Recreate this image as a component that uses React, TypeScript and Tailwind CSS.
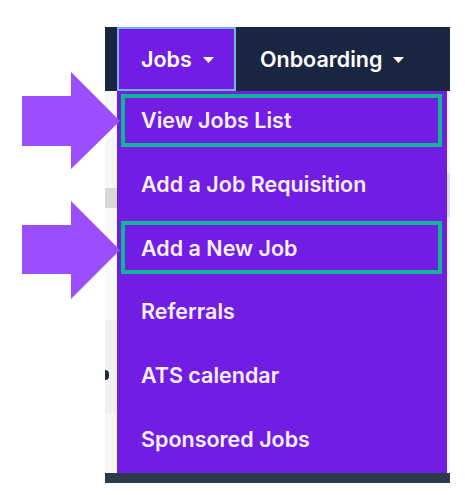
import React from "react";

const items = [
  { label: "View Jobs List", marked: true },
  { label: "Add a Job Requisition", marked: false },
  { label: "Add a New Job", marked: true },
  { label: "Referrals", marked: false },
  { label: "ATS calendar", marked: false },
  { label: "Sponsored Jobs", marked: false },
];

function Caret() {
  return (
    <svg width="11" height="6" viewBox="0 0 11 6" className="ml-[11px] mt-[2px]">
      <path d="M0 0 L11 0 L5.5 6 Z" fill="#ffffff" />
    </svg>
  );
}

function Arrows() {
  return (
    <svg width="465" height="495" className="absolute left-0 top-0 pointer-events-none">
      <polygon points="22,96 71,96 71,72 120,121 71,169 71,146 22,146" fill="#9b4efd" />
      <polygon points="22,225 71,225 71,201 120,250 71,299 71,274 22,274" fill="#9b4efd" />
    </svg>
  );
}

export default function App() {
  return (
    <div
      className="relative w-[465px] h-[495px] bg-white overflow-hidden"
      style={{ fontFamily: "Inter, Lato, sans-serif" }}
    >
      <div className="ml-[105px] pt-[27px] w-[345px] flex flex-col">
        {/* navbar */}
        <div className="h-[64px] bg-[#1a2541] flex items-stretch pl-[12px] text-white text-[21.5px] font-semibold">
          <div className="w-[119px] bg-[#721de3] border-2 border-[#72b3ea] flex items-center pl-[22px]">
            <span>Jobs</span>
            <Caret />
          </div>
          <div className="flex items-center pl-[24px]">
            <span>Onboarding</span>
            <Caret />
          </div>
        </div>

        {/* page under the dropdown */}
        <div className="flex h-[382px]">
          <div className="w-[12px] bg-[#f7f7f7] flex flex-col">
            <div className="h-[97px]" />
            <div className="h-[20px] bg-[#d9d9d9]" />
            <div className="h-[112px] bg-[#fafafa]" />
            <div className="h-[93px] bg-[#f1f1f1] flex items-center">
              <div className="w-[4px] h-[10px] rounded-r-full bg-[#1f2a3a] mt-[16px]" />
            </div>
          </div>

          {/* dropdown */}
          <div className="w-[330px] bg-[#721de3] flex flex-col">
            {items.map((it) => (
              <div key={it.label} className="h-[63.7px] pt-[3px] pl-[4px] pr-[5px]">
                <div
                  className={
                    "h-[53px] flex items-center pl-[16px] border-4 " +
                    (it.marked ? "border-[#10b596]" : "border-transparent")
                  }
                >
                  <span className="text-[21.5px] font-semibold text-[#f7f0ff] leading-none mt-[1px]">
                    {it.label}
                  </span>
                </div>
              </div>
            ))}
          </div>

          <div className="w-[3px] bg-[#f6f6f6] flex flex-col">
            <div className="h-[82px]" />
            <div className="h-[44px] bg-[#dedede]" />
          </div>
        </div>

        <div className="h-[10px] bg-[#2d3a4b]" />
      </div>

      <Arrows />
    </div>
  );
}
